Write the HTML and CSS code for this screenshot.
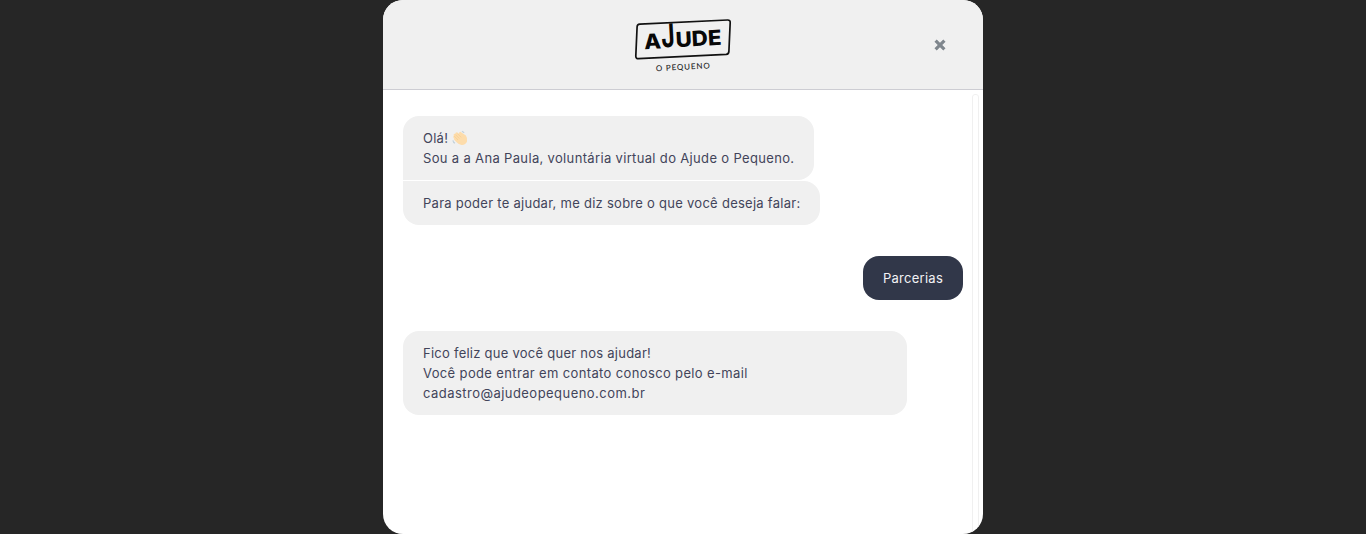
FILE: index.html
```html
<!DOCTYPE html>
<html lang="pt-BR">
<head>
<meta charset="utf-8">
<title>Ajude o Pequeno</title>
<link rel="stylesheet" href="styles.css">
</head>
<body>
<main class="chat">
  <header class="header">
    <svg class="logo" width="100" height="56" viewBox="633 17 100 56" role="img" aria-label="Ajude o Pequeno">
      <path class="frame" d="M639.8 24.1L727.6 20Q730.3 19.9 730.2 22.4L728.9 51.4Q728.8 54.2 726.2 54.4L638.6 58.7Q635.7 58.8 635.8 56L637.1 26.8Q637.2 24.3 639.8 24.1Z"/>
      <g class="brand">
        <text transform="translate(644.6 49.3) rotate(-3)" textLength="17" lengthAdjust="spacingAndGlyphs">A</text>
        <text class="tall" transform="translate(661.8 47.4) rotate(-3) scale(1.1 1.55)">J</text>
        <text transform="translate(675.9 47.2) rotate(-3)" textLength="46" lengthAdjust="spacingAndGlyphs">UDE</text>
      </g>
      <text class="tagline" transform="translate(656 71.2) rotate(-3)" textLength="54">O PEQUENO</text>
    </svg>
    <button class="close" aria-label="Fechar"><svg width="12" height="12" viewBox="0 0 12 12"><path d="M1.6 1.6L10.4 10.4M10.4 1.6L1.6 10.4"/></svg></button>
  </header>
  <section class="messages">
    <div class="bubble first">
      <p><span class="hello">Olá!</span> <svg class="wave" width="16" height="16" viewBox="0 0 16 16" aria-hidden="true"><path class="hand" d="M1.5 7.8Q.8 6.5 1.8 5.7L1.6 4.8Q1.8 3.4 3.2 3.7L3.7 2.7Q4.7 1.9 5.8 2.8L7 3.8L7.2 2.4Q8.4 1.2 9.4 2.4L13.9 5.6Q15.8 8.5 15 11.5Q13.7 14.9 10 15Q7.3 15.2 4.6 12.3L2.2 9.8Q1.3 9 2.2 8.3Z"/><path class="crease" d="M2.2 6L6 10M3.4 4.6L7.4 8.6M5.5 3.7L9.2 7.4"/><path class="motion" d="M10 1.2L12.2 2.7M.9 10.4Q1.2 12.7 3 13.2"/></svg></p>
      <p class="intro">Sou a a Ana Paula, voluntária virtual do Ajude o Pequeno.</p>
    </div>
    <div class="bubble second"><p class="question">Para poder te ajudar, me diz sobre o que você deseja falar:</p></div>
    <div class="bubble reply"><p class="choice">Parcerias</p></div>
    <div class="bubble answer">
      <p class="thanks">Fico feliz que você quer nos ajudar!</p>
      <p class="contact">Você pode entrar em contato conosco pelo e-mail</p>
      <p class="email">cadastro@ajudeopequeno.com.br</p>
    </div>
    <div class="track"></div>
  </section>
</main>
</body>
</html>
```
FILE: styles.css
```css
* { box-sizing: border-box; }
body { margin: 0; background: #262626; font-family: Inter, "Open Sans", sans-serif; }
.chat { width: 600px; height: 534px; margin: 0 auto; background: #fff; border-radius: 20px; overflow: hidden; display: flex; flex-direction: column; }
.header { height: 90px; flex: none; display: grid; grid-template-columns: 1fr 100px 1fr; align-items: center; background: #f0f0f0; border-bottom: 1px solid #cdcdd3; }
.logo { grid-column: 2; overflow: visible; }
.frame { fill: none; stroke: #111; stroke-width: 1.7; }
.brand { font: 800 21px Inter, sans-serif; fill: #080808; }
.tall { font-weight: 700; }
.tagline { font: 500 8px Lato, sans-serif; fill: #222; }
.close { justify-self: end; margin-right: 37px; width: 12px; height: 12px; padding: 0; border: 0; background: none; display: flex; }
.close svg { overflow: visible; }
.close path { stroke: #7f868d; stroke-width: 3.2; fill: none; }
.messages { position: relative; flex: 1; display: flex; flex-direction: column; align-items: flex-start; padding: 26px 20px 0; }
.bubble { padding: 12px 20px; border-radius: 16px; background: #f0f0f0; color: #42445a; font-size: 13px; line-height: 20px; white-space: nowrap; }
.bubble p { margin: 0; height: 20px; }
.first { width: 411px; height: 64px; border-bottom-left-radius: 0; }
.second { width: 417px; height: 44px; margin-top: 1px; border-top-left-radius: 0; }
.reply { width: 100px; height: 44px; margin-top: 31px; align-self: flex-end; background: #313749; color: #f2f2f5; }
.answer { width: 504px; height: 84px; margin-top: 31px; }
.hello { letter-spacing: .25px; }
.intro { letter-spacing: .34px; }
.question { letter-spacing: .27px; }
.choice { letter-spacing: .26px; }
.thanks { letter-spacing: .25px; }
.contact { letter-spacing: .36px; }
.email { letter-spacing: .46px; }
.wave { vertical-align: -3px; }
.hand { fill: #fddcab; }
.crease { fill: none; stroke: #f3c98c; stroke-width: .6; }
.motion { fill: none; stroke: #c4d2dc; stroke-width: 1.2; }
.track { position: absolute; top: 4px; right: 4px; bottom: -8px; width: 7px; border: 1px solid #f0f0f0; border-radius: 3px; }
```
